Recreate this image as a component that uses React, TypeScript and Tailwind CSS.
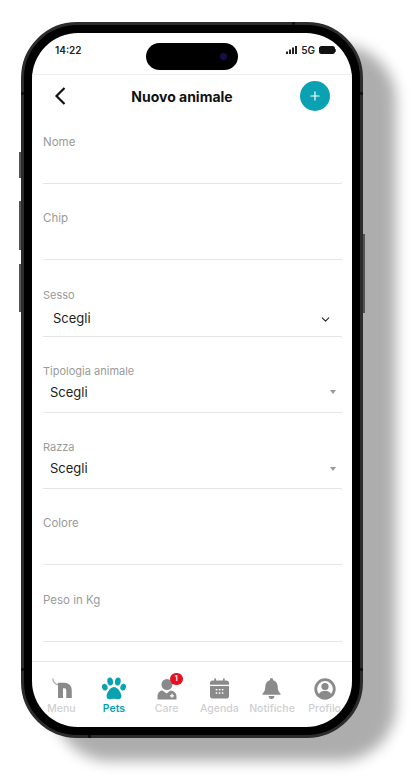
import type { ReactNode } from 'react';
import { ChevronDown, Plus } from 'lucide-react';

function MenuIcon() {
  return (
    <svg viewBox="0 0 24 23" className="w-[24px] h-[23px]" fill="none">
      <path d="M3.700 1.500c.3 3 2 5.500 6 6.500" stroke="#b5b5b5" strokeWidth="1.500" />
      <path d="M11.500 21V8.500" stroke="#8a8a8a" strokeWidth="5" />
      <path d="M9 8.500h6.500a4.500 4.500 0 0 1 4.500 4.500V21" stroke="#8a8a8a" strokeWidth="5.500" />
    </svg>
  );
}

function PawIcon() {
  return (
    <svg viewBox="0 0 26 24" className="w-[26px] h-[23px]" fill="#0aa2b3">
      <ellipse cx="3.400" cy="10.600" rx="2.900" ry="3.600" transform="rotate(-18 3.400 10.600)" />
      <ellipse cx="9" cy="4.600" rx="3" ry="4.200" transform="rotate(-8 9 4.600)" />
      <ellipse cx="17" cy="4.600" rx="3" ry="4.200" transform="rotate(8 17 4.600)" />
      <ellipse cx="22.600" cy="10.600" rx="2.900" ry="3.600" transform="rotate(18 22.600 10.600)" />
      <path d="M13 10.500c3.200 0 6.600 4.600 7.600 8 .8 3-1.200 4.800-3.600 4.800-1.600 0-2.600-.7-4-.7s-2.400.7-4 .7c-2.400 0-4.400-1.800-3.600-4.800 1-3.400 4.400-8 7.600-8z" />
    </svg>
  );
}

function CareIcon() {
  return (
    <svg viewBox="0 0 20 22" className="w-[20px] h-[22px]" fill="#8a8a8a">
      <circle cx="10" cy="6.500" r="5.500" />
      <path d="M0.500 21.500v-3.500c0-3.500 3-5.500 5-5.500l4 3 4-3c3 .3 6 2.500 6 5.500v3.500z" />
      <path d="M13 17.800h4M15 15.800v4" stroke="#fff" strokeWidth="1.200" />
    </svg>
  );
}

function AgendaIcon() {
  return (
    <svg viewBox="0 0 20 22" className="w-[19px] h-[21px]" fill="#8a8a8a">
      <rect x="4.500" y="0.300" width="1.800" height="4" rx="0.900" />
      <rect x="13.700" y="0.300" width="1.800" height="4" rx="0.900" />
      <path d="M3 2.500h14a3 3 0 0 1 3 3V7H0V5.500a3 3 0 0 1 3-3z" />
      <path d="M0 8.300h20V18.500a3 3 0 0 1-3 3H3a3 3 0 0 1-3-3z" />
      <g fill="#fff">
        <rect x="6" y="11.500" width="1.700" height="1.500" />
        <rect x="9.200" y="11.500" width="1.700" height="1.500" />
        <rect x="12.400" y="11.500" width="1.700" height="1.500" />
        <rect x="6" y="15" width="1.700" height="1.500" />
        <rect x="9.200" y="15" width="1.700" height="1.500" />
        <rect x="12.400" y="15" width="1.700" height="1.500" />
      </g>
    </svg>
  );
}

function BellIcon() {
  return (
    <svg viewBox="0 0 20 22" className="w-[19px] h-[21px]" fill="#8a8a8a">
      <path d="M10 0a1.700 1.700 0 0 1 1.700 1.700v.6c3 .8 4.800 3.400 4.800 6.700 0 4 1 5.500 3 7.500v1H.5v-1c2-2 3-3.500 3-7.500 0-3.300 1.800-5.900 4.800-6.700v-.6A1.700 1.700 0 0 1 10 0z" />
      <path d="M7 19h6a3 3 0 0 1-6 0z" />
    </svg>
  );
}

function ProfileIcon() {
  return (
    <svg viewBox="0 0 22 22" className="w-[22px] h-[22px]">
      <circle cx="11" cy="11" r="9.300" fill="#fff" stroke="#8a8a8a" strokeWidth="2.800" />
      <circle cx="11" cy="8.500" r="3.600" fill="#8a8a8a" />
      <path d="M4.500 17c1-3 3.500-4.200 6.500-4.200s5.500 1.200 6.500 4.200c-1.600 2-4 3-6.500 3s-4.900-1-6.500-3z" fill="#8a8a8a" />
    </svg>
  );
}

function EmptyField({ label }: { label: string }) {
  return (
    <div className="h-[49px] mb-[27.300px] border-b border-[#e6e6e6]">
      <p className="text-[11.500px] leading-[14px] text-[#9a9a9a]">{label}</p>
    </div>
  );
}

function SelectField({ label }: { label: string }) {
  return (
    <div className="h-[49px] mb-[27.300px] border-b border-[#e6e6e6]">
      <p className="text-[11px] leading-[14px] text-[#9a9a9a]">{label}</p>
      <div className="flex items-center justify-between pl-[7px] pr-[6px] h-[29px]">
        <span className="text-[13px] text-[#222]">Scegli</span>
        <span className="w-0 h-0 border-x-[3.500px] border-x-transparent border-t-[4px] border-t-[#9a9a9a]" />
      </div>
    </div>
  );
}

function Tab({ label, icon, active, badge }: { label: string; icon: ReactNode; active?: boolean; badge?: boolean }) {
  return (
    <div className="flex flex-col items-center">
      <div className="relative h-[23px] flex items-center justify-center">
        {icon}
        {badge && (
          <span className="absolute -top-[4px] -right-[6px] w-[13px] h-[12px] rounded-full bg-[#e8101f] text-white text-[7px] font-bold leading-[12px] text-center">1</span>
        )}
      </div>
      <span className={`mt-[3px] text-[10.500px] leading-[12px] whitespace-nowrap ${active ? 'font-semibold text-[#0aa2b3]' : 'font-medium text-[#cfcfd2]'}`}>{label}</span>
    </div>
  );
}

export default function App() {
  return (
    <div className="w-[420px] h-[780px] bg-white overflow-hidden pl-[21px] pt-[22px]" style={{ fontFamily: 'Inter, "Liberation Sans", sans-serif' }}>
      <div className="relative w-[342px] h-[716px] rounded-[56px] bg-black border-[3px] border-[#2c2c2c] p-[8px] shadow-[33px_23px_14px_rgba(0,0,0,0.32)]">
        {/* side buttons */}
        <div className="absolute left-[-5px] top-[127px] w-[2px] h-[26px] bg-[#555]" />
        <div className="absolute left-[-5px] top-[176px] w-[2px] h-[49px] bg-[#555]" />
        <div className="absolute left-[-5px] top-[239px] w-[2px] h-[48px] bg-[#555]" />
        <div className="absolute right-[-5px] top-[209px] w-[2px] h-[79px] bg-[#555]" />

        {/* antenna bands */}
        <div className="absolute left-[-3px] top-[67px] w-[3px] h-[3px] bg-[#111]" />
        <div className="absolute right-[-3px] top-[67px] w-[3px] h-[3px] bg-[#111]" />
        <div className="absolute left-[-3px] top-[643px] w-[3px] h-[3px] bg-[#111]" />
        <div className="absolute right-[-3px] top-[643px] w-[3px] h-[3px] bg-[#111]" />
        <div className="absolute left-[268px] top-[-3px] w-[3px] h-[3px] bg-[#111]" />
        <div className="absolute left-[64px] bottom-[-3px] w-[3px] h-[3px] bg-[#111]" />

        <div className="relative h-full rounded-[46px] bg-white overflow-hidden flex flex-col">
          {/* status bar */}
          <div className="h-[42px] shrink-0 border-b border-[#eeeeee] flex justify-between pl-[23px] pr-[16px] pt-[11px]">
            <span className="text-[10px] leading-[12px] font-semibold text-[#222]">14:22</span>
            <div className="flex items-start gap-[3px]">
              <svg viewBox="0 0 12 8" className="w-[12px] h-[8px] mt-[2px]" fill="#222">
                <rect x="0" y="5.500" width="2" height="2.500" />
                <rect x="3" y="3.500" width="2" height="4.500" />
                <rect x="6" y="1.500" width="2" height="6.500" />
                <rect x="9" y="0" width="2" height="8" />
              </svg>
              <span className="text-[10px] leading-[12px] font-semibold text-[#222]">5G</span>
              <div className="flex items-center mt-[2px] ml-[1px]">
                <div className="w-[16px] h-[8px] rounded-[2.500px] bg-[#111]" />
                <div className="w-[1px] h-[3px] bg-[#555]" />
              </div>
            </div>
          </div>

          {/* dynamic island */}
          <div className="absolute left-[114px] top-[10px] w-[92px] h-[27px] rounded-full bg-black">
            <div className="absolute right-[11px] top-[10px] w-[7px] h-[7px] rounded-full bg-[#14104a]" />
          </div>

          {/* header */}
          <div className="h-[42px] shrink-0 flex items-center justify-between pl-[22px] pr-[22px]">
            <svg viewBox="0 0 12 18" className="w-[12px] h-[18px]" fill="none">
              <path d="M10.500 1 2.500 9l8 8" stroke="#111" strokeWidth="2.200" />
            </svg>
            <h1 className="text-[14px] font-bold text-[#111] mr-[2px]">Nuovo animale</h1>
            <div className="w-[30px] h-[30px] rounded-full bg-[#0aa2b3] flex items-center justify-center">
              <Plus className="w-[14px] h-[14px] text-white" strokeWidth={2} />
            </div>
          </div>

          {/* form */}
          <div className="flex-1 overflow-hidden pl-[11px] pr-[10px] pt-[18px]">
            <EmptyField label="Nome" />
            <EmptyField label="Chip" />
            <div className="h-[49px] mb-[27.300px] border-b border-[#e6e6e6]">
              <p className="text-[11px] leading-[14px] text-[#9a9a9a]">Sesso</p>
              <div className="flex items-center justify-between pl-[10px] pr-[10px] h-[35px]">
                <span className="text-[13px] text-[#222]">Scegli</span>
                <ChevronDown className="w-[13px] h-[13px] text-[#222]" strokeWidth={2} />
              </div>
            </div>
            <SelectField label="Tipologia animale" />
            <SelectField label="Razza" />
            <EmptyField label="Colore" />
            <EmptyField label="Peso in Kg" />
          </div>

          {/* tab bar */}
          <div className="h-[66px] shrink-0 border-t border-[#e6e6e6] grid grid-cols-6 pl-[3px] pr-[1px] pt-[15px]">
            <Tab label="Menu" icon={<MenuIcon />} />
            <Tab label="Pets" active icon={<PawIcon />} />
            <Tab label="Care" badge icon={<CareIcon />} />
            <Tab label="Agenda" icon={<AgendaIcon />} />
            <Tab label="Notifiche" icon={<BellIcon />} />
            <Tab label="Profilo" icon={<ProfileIcon />} />
          </div>
        </div>
      </div>
    </div>
  );
}
